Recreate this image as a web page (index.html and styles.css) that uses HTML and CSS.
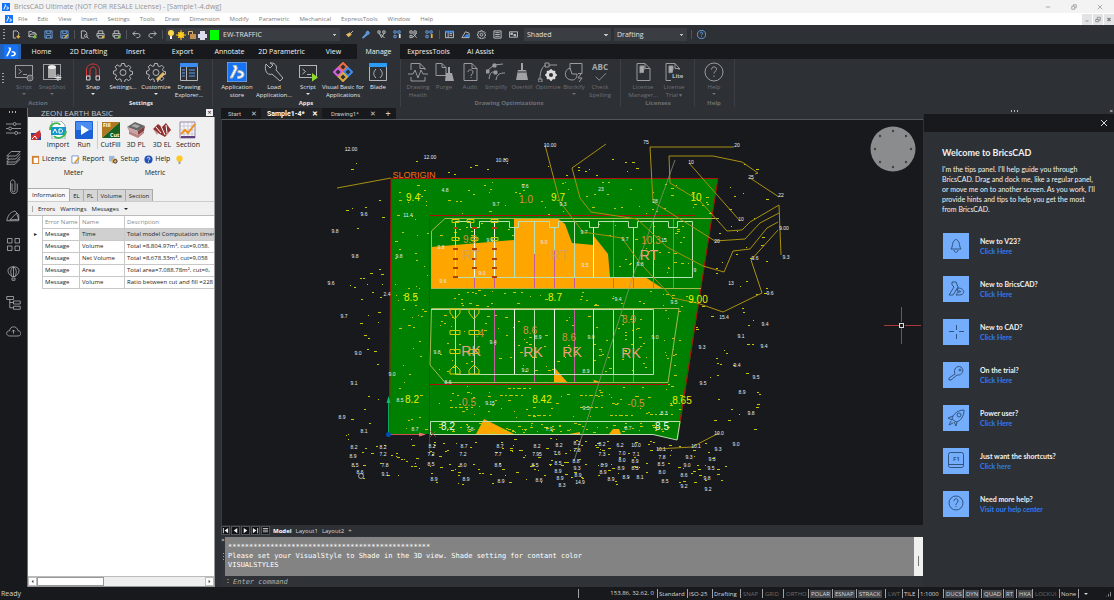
FILE: index.html
```html
<!DOCTYPE html>
<html lang="en">
<head>
<meta charset="utf-8">
<title>BricsCAD Ultimate - [Sample1-4.dwg]</title>
<link rel="stylesheet" href="styles.css">
</head>
<body>
<svg class="defs" aria-hidden="true">
  <symbol id="logo" viewBox="0 0 20 20"><rect width="20" height="20" fill="#1673f5"/><path d="M6 3.500h3.500l.8 3-4.800 9.500H3l4.600-9.500zM11 8.500c4 0 6 1.600 6 4s-2.500 4-6.500 4v-2.200c2.500 0 4-.5 4-1.800s-1.300-1.800-3.500-1.800z" fill="#fff"/></symbol>
  <symbol id="gear" viewBox="0 0 20 20"><path d="M8.500 1.500h3l.5 2.500 1.700.7 2.100-1.400 2 2-1.300 2.100.7 1.700 2.300.5v2.800l-2.300.5-.7 1.700 1.300 2.100-2 2-2.100-1.400-1.700.7-.5 2.500h-3L8 17.500l-1.700-.7-2.100 1.400-2-2 1.300-2.100-.7-1.700-2.300-.5V9.100l2.300-.5.7-1.700-1.300-2.100 2-2 2.100 1.400L8 4z"/><circle cx="10" cy="10.500" r="3"/></symbol>
  <symbol id="page" viewBox="0 0 20 20"><path d="M4 1.500h8l5 5v12H4zM12 1.500v5h5"/></symbol>
  <symbol id="term" viewBox="0 0 20 20"><rect x="1.500" y="3.500" width="17" height="12"/><path d="M4.500 7l3 2.500-3 2.500M9 12.500h4"/></symbol>
  <symbol id="brush" viewBox="0 0 20 20"><path d="M9 1h2v7h3l2 10H4L6 8h3z" fill="#a0a2a5" stroke="none"/><path d="M6 10h8" stroke="#2d3035"/></symbol>
  <symbol id="help" viewBox="0 0 20 20"><circle cx="10" cy="10" r="9"/><path d="M7.500 7.500c0-3.500 5-3.500 5-.3 0 2-2.500 2-2.500 4.300M10 13.500v1.500"/></symbol>
  <symbol id="floppy" viewBox="0 0 20 20"><path d="M2 2h16v16H2zM6 2v6h8V2M5 18v-6h10v6"/></symbol>
  <symbol id="printer" viewBox="0 0 20 20"><path d="M5 8V2h10v6M5 14H2V8h16v6h-3M5 12h10v6H5z"/></symbol>
  <symbol id="boxes" viewBox="0 0 20 20"><path d="M2 2h5v5H2zM11 2h5v5h-5zM2 12h5v5H2z"/></symbol>
</svg>

<header class="titlebar">
  <svg class="app-mark"><use href="#logo"/></svg>
  <span class="title">BricsCAD Ultimate (NOT FOR RESALE License) - [Sample1-4.dwg]</span>
  <div class="win-buttons">
    <button aria-label="Minimize"><svg viewBox="0 0 8 8"><path d="M1 4h6"/></svg></button>
    <button aria-label="Restore"><svg viewBox="0 0 8 8"><path d="M1 3h4v4H1zM3 3V1h4v4H5"/></svg></button>
    <button aria-label="Close"><svg viewBox="0 0 8 8"><path d="M1 1l6 6M7 1L1 7"/></svg></button>
  </div>
</header>

<nav class="menubar">
  <svg class="app-mark"><use href="#logo"/></svg>
  <button>File</button><button>Edit</button><button>View</button><button>Insert</button><button>Settings</button><button>Tools</button><button>Draw</button><button>Dimension</button><button>Modify</button><button>Parametric</button><button>Mechanical</button><button>ExpressTools</button><button>Window</button><button>Help</button>
  <div class="mdi-buttons">
    <button aria-label="Minimize drawing"><svg viewBox="0 0 8 8"><path d="M2 6h4"/></svg></button>
    <button aria-label="Restore drawing"><svg viewBox="0 0 8 8"><path d="M1 4h4v3H1zM3 4V1h4v4H5"/></svg></button>
    <button aria-label="Close drawing"><svg viewBox="0 0 8 8"><path d="M2 2l4 4M6 2L2 6" stroke-width="1.500"/></svg></button>
  </div>
</nav>

<div class="quickbar">
  <i class="grip"></i>
  <div class="qgroup">
    <button aria-label="New"><svg viewBox="0 0 20 20"><path d="M3 2h8l4 4v5M3 2v16h6"/><path d="M14 11v8M10 15h8" stroke="#e0b040" stroke-width="3"/></svg></button>
    <button aria-label="Open"><svg viewBox="0 0 20 20"><path d="M2 15V3h6l2 3h6v3M2 15l4-6h13l-3 6z"/><path d="M15 11v8M11 16h8" stroke="#7ac040" stroke-width="3"/></svg></button>
    <button aria-label="Save"><svg class="blue" viewBox="0 0 20 20"><use href="#floppy"/></svg></button>
    <button aria-label="Save as"><svg class="blue" viewBox="0 0 20 20"><use href="#floppy"/><path d="M10 18l8-8" stroke="#e0b040" stroke-width="3"/></svg></button>
  </div>
  <div class="qgroup">
    <button aria-label="Preview"><svg viewBox="0 0 20 20"><path d="M3 2h8l4 4v4M3 2v16h7"/><circle cx="13" cy="13" r="3"/><path d="M15 15l4 4"/></svg></button>
    <button aria-label="Print"><svg viewBox="0 0 20 20"><use href="#printer"/><circle cx="16" cy="16" r="3" fill="#e0b040" stroke="none"/></svg></button>
    <button aria-label="Publish"><svg viewBox="0 0 20 20"><use href="#printer"/><circle cx="16" cy="16" r="3" fill="#7ac040" stroke="none"/></svg></button>
  </div>
  <div class="qgroup">
    <button aria-label="Undo"><svg viewBox="0 0 20 20"><path d="M7 3L2 8l5 5M2 8h11c7 0 6 9 0 9h-3"/></svg></button>
    <button aria-label="Redo"><svg viewBox="0 0 20 20"><path d="M13 3l5 5-5 5M18 8H7c-7 0-6 9 0 9h3"/></svg></button>
  </div>
  <div class="layerbox">
    <svg viewBox="0 0 54 12"><circle cx="5" cy="4" r="3" fill="#ffd84a"/><path d="M4 7h2v3H4z" fill="#eee"/><circle cx="15" cy="6" r="3" fill="#ffc81e"/><path d="M15 1v10M10 6h10M12 3l6 6M18 3l-6 6" stroke="#ffc81e"/><path d="M22.500 6V2.500h4V5" fill="none" stroke="#d8b070"/><path d="M24 5h6v5h-6z" fill="#c09050"/><path d="M32 5h9v4h-9zM34 2h5v3h-5zM34 8h5v3h-5z" fill="#dde"/><path d="M44 1h9v10h-9z" fill="#00ff00"/></svg>
    <select class="layer" aria-label="Layer"><option>EW-TRAFFIC</option></select>
  </div>
  <div class="qgroup">
    <button aria-label="Match"><svg viewBox="0 0 20 20"><path d="M2 10l9-5 4 5-7 6z" fill="#e0b860" stroke="none"/><path d="M13 7l5-5"/></svg></button>
    <button aria-label="Pick color"><svg class="blue" viewBox="0 0 20 20"><path d="M3 17l9-10 3 3-10 8zM11 5l4-3 4 4-3 4z" fill="#5590d8"/></svg></button>
    <button aria-label="Filter"><svg viewBox="0 0 20 20"><path d="M2 2h5v5H2zM13 2h5v5h-5zM5 7l5 10 6-10M8 9l9 9"/></svg></button>
    <button aria-label="Isolate"><svg class="blue" viewBox="0 0 20 20"><use href="#boxes"/><path d="M15 9v9" stroke="#ddd" stroke-width="4"/></svg></button>
    <button aria-label="Hide"><svg viewBox="0 0 20 20"><use href="#boxes"/><path d="M8 7l9 10M17 7l-9 10"/></svg></button>
    <button aria-label="Show"><svg class="blue" viewBox="0 0 20 20"><use href="#boxes"/><path d="M15 9v9" stroke="#f0b030" stroke-width="4"/></svg></button>
  </div>
  <div class="qgroup open">
    <button aria-label="Explorer"><svg viewBox="0 0 20 20"><path d="M1 3h18v14H1zM7 3v14M10 8h6M10 12h6"/><path d="M1 4h18" stroke="#3a8cf0" stroke-width="4"/></svg></button>
    <button aria-label="Structure"><svg viewBox="0 0 20 20"><path d="M2 17L10 4l8 3v10z"/><path d="M8 15l6-6 3 5z" fill="#3a8cf0" stroke="#3a8cf0"/></svg></button>
    <button aria-label="Settings"><svg><use href="#gear"/></svg></button>
    <button aria-label="Properties"><svg viewBox="0 0 20 20"><path d="M2 2h16v16H2zM5 6h10M5 10h10M5 14h10"/></svg></button>
    <button aria-label="Panels"><svg viewBox="0 0 20 20"><path d="M1 4h18v12H1z"/><path d="M4 7h4v3H4zM11 10h4v3h-4z" fill="#ccc"/></svg></button>
  </div>
  <select class="visual" aria-label="Visual style"><option>Shaded</option></select>
  <select class="space" aria-label="Workspace"><option>Drafting</option></select>
  <div class="qgroup last"><button aria-label="Help"><svg class="blue"><use href="#help"/></svg></button></div>
</div>

<nav class="ribbon-tabs">
  <button class="brand" aria-label="Application menu"><svg><use href="#logo"/></svg></button>
  <button>Home</button><button>2D Drafting</button><button>Insert</button><button>Export</button><button>Annotate</button><button class="wide">2D Parametric</button><button>View</button><button class="active">Manage</button><button class="wide">ExpressTools</button><button>AI Assist</button>
</nav>

<section class="ribbon">
  <i class="grip tall"></i>
  <div class="group dim action">
    <div class="tools">
      <button class="w28"><svg viewBox="0 0 20 20"><use href="#term"/><circle cx="16" cy="16" r="3" fill="#55585c"/></svg>Script<b></b></button>
      <button class="w28"><svg viewBox="0 0 20 20"><rect x="1.500" y="2.500" width="17" height="15"/><path d="M6 5v11h8V5z" fill="#aaa" stroke="none"/><ellipse cx="10" cy="5" rx="4" ry="2" fill="#eee" stroke="none"/><path d="M16 12v7M12.500 15.500h7M13.500 13l5 5M18.500 13l-5 5" stroke="#ddd"/></svg>SnapShot<b></b></button>
    </div><h2>Action</h2>
  </div>
  <div class="group settings">
    <div class="tools">
      <button class="w30"><svg viewBox="0 0 20 20"><path d="M3.500 14V8c0-8 13-8 13 0v6h-3.500V8c0-4-6-4-6 0v6z" stroke="#d83a3a"/><path d="M3.500 14H7v4H3.500zM13 14h3.500v4H13z" stroke="#ccc"/></svg>Snap<b></b></button>
      <button class="w30"><svg><use href="#gear"/></svg>Settings...</button>
      <button class="w36"><svg viewBox="0 0 20 20"><use href="#gear"/><path d="M11 18l7-7" stroke="#e0b868" stroke-width="3"/></svg>Customize<b></b></button>
      <button class="w30"><svg viewBox="0 0 20 20"><path d="M1.500 1.500h17v17h-17zM7.500 5v13"/><path d="M1 3h18" stroke="#3a8cf0" stroke-width="4"/><path d="M3 8h3M3 11h3M3 14h3M10 8h6M10 11h6M10 14h6" stroke="#5aa0f5"/></svg>Drawing<br>Explorer...</button>
    </div><h2>Settings</h2>
  </div>
  <div class="group apps">
    <div class="tools">
      <button class="w38"><svg><use href="#logo"/></svg>Application<br>store</button>
      <button class="w36"><svg viewBox="0 0 20 20"><path d="M2 2l4 4 3-3-3-2c4-1 8 3 6 7l7 8-3 3-8-7c-5 2-8-4-6-10z"/></svg>Load<br>Application...</button>
      <button class="w32"><svg viewBox="0 0 20 20"><use href="#term"/><path d="M14 11l6 4.500-6 4z" fill="#8fdc28" stroke="none"/></svg>Script<b></b></button>
      <button class="w38"><svg class="vb" viewBox="0 0 20 20"><path d="M10 1l4 4-4 4-4-4z" stroke="#ef7044"/><path d="M15 6l4 4-4 4-4-4z" stroke="#3a8cf0"/><path d="M5 6l4 4-4 4-4-4z" stroke="#d060e0"/><path d="M10 11l4 4-4 4-4-4z" stroke="#e0a840"/></svg>Visual Basic for<br>Applications</button>
      <button class="w32"><svg viewBox="0 0 20 20"><path d="M1.500 1.500h17v17h-17z"/><path d="M1 3h18" stroke="#2a9cf5" stroke-width="4"/><path d="M8 7c-3 3-3 6 0 9M12 7c3 3 3 6 0 9"/></svg>Blade</button>
    </div><h2>Apps</h2>
  </div>
  <div class="group dim optimize">
    <div class="tools">
      <button class="w26"><svg viewBox="0 0 20 20"><path d="M3 8V1.500h9l5 5V8M12 1.500v5h5M3 15v4h14v-4M0 12h5l2-4 3 8 3-8 2 4h5"/></svg>Drawing<br>Health</button>
      <button class="w26"><svg viewBox="0 0 20 20"><path d="M2 1.500h6l4 4v8H2zM8 1.500v4h4"/><path d="M14 5h2v6h2l2 8h-9l1-8h2z" fill="#a0a2a5" stroke="none"/></svg>Purge</button>
      <button class="w26"><svg viewBox="0 0 20 20"><use href="#page"/><path d="M8 10c0-3 5-3 5 0 0 2-2 2-2 4M11 15v1"/></svg>Audit</button>
      <button class="w26"><svg viewBox="0 0 20 20"><path d="M1 9L8 3l9-1M3 17c1-7 3-8 7-6M10 18c1-6 4-7 9-7"/><path d="M0 8h3v3H0zM7 2h3v3H7zM8 9h3v3H8z" fill="#999"/></svg>Simplify</button>
      <button class="w26"><svg><use href="#brush"/></svg>Overkill</button>
      <button class="w26"><svg viewBox="0 0 20 20"><path d="M2 17C2 8 5 4 8 3M11 3h8M0 17h4v3H0zM7 1h4v4H7z"/><circle cx="13" cy="13" r="3.500" stroke="#ddd" stroke-width="3"/><path d="M13 7v12M7 13h12M9 9l8 8M17 9l-8 8" stroke="#ddd" stroke-width="1.500"/><circle cx="13" cy="13" r="2" fill="#2d3035" stroke="none"/></svg>Optimize</button>
      <button class="w26"><svg viewBox="0 0 20 20"><path d="M6 1.500h12v10h-4M6 1.500v6M6 6c-7 2-6 12 2 12 4 0 5-3 5-6H8zM17 12l-3 4h4l-3 4"/></svg>Blockify<b></b></button>
      <button class="w26"><span class="abc">ABC</span><svg class="tick" viewBox="0 0 20 10"><path d="M5 4l4 4 8-8"/></svg>Check<br>Spelling</button>
    </div><h2>Drawing Optimizations</h2>
  </div>
  <div class="group dim licenses">
    <div class="tools">
      <button class="w32"><svg viewBox="0 0 20 20"><use href="#page"/><path d="M7 4h4v3l-1 4-1-1-2 1z" fill="#aaa"/></svg>License<br>Manager...</button>
      <button class="w30"><svg viewBox="0 0 20 20"><path d="M15 8V6l-4-4.500H2v17h5M11 1.500v5h5"/><path d="M5 4h4v3l-1 4-1-1-2 1z" fill="#aaa"/><text x="8" y="16" class="lite">Lite</text></svg>License<br>Trial ▾</button>
    </div><h2>Licenses</h2>
  </div>
  <div class="group dim help">
    <div class="tools"><button class="w26"><svg><use href="#help"/></svg>Help<b></b></button></div><h2>Help</h2>
  </div>
</section>

<div class="work">
  <aside class="rail">
    <i class="grip-h"></i>
    <button aria-label="Properties"><svg viewBox="0 0 20 20"><path d="M0 4h9M14 4h6M0 10h3M8 10h12M0 16h11M16 16h4"/><circle cx="11.500" cy="4" r="2"/><circle cx="5.500" cy="10" r="2"/><circle cx="13.500" cy="16" r="2"/></svg></button>
    <button aria-label="Layers"><svg viewBox="0 0 20 20"><path d="M7 2h12l-6 6H1zM4 8l-3 4h12l6-7M4 12l-3 4h12l6-7M3 16l-2 3h11l7-7"/></svg></button>
    <button aria-label="Attachments"><svg viewBox="0 0 20 20"><path d="M8 6v9c0 3 4 3 4 0V5c0-5-6-5-6 0v10c0 6 9 6 9 0V6"/></svg></button>
    <button aria-label="Structure"><svg viewBox="0 0 20 20"><path d="M1 17c2-10 7-12 11-13l5 5v8zM5 16l9-9 3 8z"/></svg></button>
    <button aria-label="Components"><svg viewBox="0 0 20 20"><path d="M2 2h6v6H2zM12 2h6v6h-6zM2 12h6v6H2zM12 12h6v6h-6z"/></svg></button>
    <button aria-label="Balloon"><svg viewBox="0 0 20 20"><path d="M10 1c-10 0-9 9-2 13h4c7-4 8-13-2-13zM10 1c-5 3-4 9-2 13M10 1c5 3 4 9 2 13M10 1v13M8 16h4v3H8z"/></svg></button>
    <button aria-label="Tree"><svg viewBox="0 0 20 20"><path d="M1 2h9v4H1zM5 6v11h5M5 10h5M10 8h9v4h-9zM10 15h9v4h-9z"/></svg></button>
    <button aria-label="Cloud"><svg viewBox="0 0 20 20"><path d="M5 16c-5 0-6-7 0-7 0-7 10-7 11 0 5 0 5 7 0 7zM10 13V8M8 10l2-2 2 2"/></svg></button>
  </aside>

  <section class="zeon">
    <header><h2>ZEON EARTH BASIC</h2><button aria-label="Close panel">×</button></header>
    <div class="zeon-body">
      <div class="bigtools">
        <svg class="pin" viewBox="0 0 10 10"><path d="M0 3h10v7H0z" fill="#2848a0"/><path d="M0 6l9-6 1 6-4 4H0z" fill="#d03030"/><path d="M1 9l3-3 2 3" stroke="#fff" fill="none"/></svg>
        <button><svg viewBox="0 0 18 18"><path d="M3 0h9l4 4v14H3z" fill="#fff" stroke="#9ab"/><path d="M2 6h15v8H2z" fill="#1598c8"/><path d="M4 12l2-4 2 4M10 8v4h2c2 0 2-4 0-4z" stroke="#fff" fill="none"/><path d="M1 9c0-8 9-8 10-5M17 10c-1 8-10 8-12 5" stroke="#40b850" stroke-width="2" fill="none"/></svg>Import</button>
        <button><svg viewBox="0 0 18 18"><rect width="18" height="18" rx="1" fill="#1c60d8"/><path d="M1 1h16v8H1z" fill="#4b8cf0"/><path d="M6 4l8 5-8 5z" fill="#fff"/></svg>Run</button>
        <button class="cut"><svg viewBox="0 0 20 18"><path d="M0 0h20L0 18z" fill="#b07820"/><path d="M20 0v18H0z" fill="#186020"/><text x="1" y="6">Fill</text><text x="9" y="17">Cut</text></svg>CutFill</button>
        <button><svg viewBox="0 0 18 18"><path d="M0 6l8-5 10 4-7 5z" fill="#666"/><path d="M0 6l11 4v4L2 10z" fill="#c8a0a0"/><path d="M11 10l7-5-1 5-6 4z" fill="#804040"/><path d="M2 10l9 4 6-4v2l-6 5-9-4z" fill="#b88080"/><path d="M4 5l4-2 5 2-3 2z" fill="#aaa"/></svg>3D PL</button>
        <button><svg viewBox="0 0 18 18"><path d="M0 8l5-5 4 3 4-4 5 7-6 7-7-4z" fill="#903030"/><path d="M3 6l5 6M8 5l4 9M13 4l1 8" stroke="#fff"/><path d="M0 8l5 4-1 2zM18 9l-5 4v2z" fill="#c89090"/></svg>3D EL</button>
        <button><svg viewBox="0 0 18 18"><path d="M1 1h15v16H1z" fill="#f4f4f8" stroke="#98a"/><path d="M1 5h15M1 9h15M1 13h15M5 1v16M9 1v16M13 1v16" stroke="#aab" stroke-width="0.500"/><path d="M2 13l4-4 3 3 7-9" stroke="#f09020" stroke-width="2" fill="none"/><path d="M2 16h14" stroke="#604080" stroke-width="2"/></svg>Section</button>
      </div>
      <div class="smalltools">
        <button><svg viewBox="0 0 10 10"><path d="M1 1h8v9H1z" fill="#d08030"/><path d="M3 3h5v6H3z" fill="#fff"/></svg>License</button>
        <button><svg viewBox="0 0 10 10"><path d="M1 1h7v8H1z" fill="#fff" stroke="#7090d0"/><path d="M4 9l5-6" stroke="#e0a030" stroke-width="2"/></svg>Report</button>
        <button><svg viewBox="0 0 10 10"><path d="M0 1h6v6H0z" fill="#9ab8e0"/><path d="M3 4h6v5H3z" fill="#d8b060"/><circle cx="7" cy="7" r="2" fill="none" stroke="#335"/></svg>Setup</button>
        <button><svg viewBox="0 0 10 10"><circle cx="5" cy="5" r="4.500" fill="#2050b8"/><path d="M3.500 4c0-2 3-2 3 0L5 6M5 7v1" stroke="#fff" fill="none"/></svg>Help</button>
        <button aria-label="Tip"><svg viewBox="0 0 10 10"><circle cx="5" cy="4" r="3.500" fill="#ffc820"/><path d="M4 7h2v3H4z" fill="#999"/></svg></button>
      </div>
      <div class="units"><span>Meter</span><span>Metric</span></div>
      <div class="ztabs"><button class="on">Information</button><button>EL</button><button>PL</button><button>Volume</button><button>Section</button></div>
      <div class="filters"><i></i><button>Errors</button><button>Warnings</button><button>Messages</button><b></b></div>
      <div class="tablewrap">
        <table>
          <thead><tr><th class="mark"></th><th class="err">Error Name</th><th class="name">Name</th><th>Description</th></tr></thead>
          <tbody>
            <tr class="sel"><td class="mark">▸</td><td class="err">Message</td><td>Time</td><td>Total model Computation time=0</td></tr>
            <tr><td class="mark"></td><td>Message</td><td>Volume</td><td>Total =8,804.97m³, cut=9,058.</td></tr>
            <tr><td class="mark"></td><td>Message</td><td>Net Volume</td><td>Total =8,678.33m³, cut=9,058</td></tr>
            <tr><td class="mark"></td><td>Message</td><td>Area</td><td>Total area=7,088.78m², cut=6,</td></tr>
            <tr><td class="mark"></td><td>Message</td><td>Volume</td><td>Ratio between cut and fill =228</td></tr>
          </tbody>
        </table>
      </div>
      <div class="hscroll"><button aria-label="Scroll left"><svg viewBox="0 0 8 8"><path d="M5 2v4L3 4z"/></svg></button><i></i><button aria-label="Scroll right"><svg viewBox="0 0 8 8"><path d="M3 2v4l2-2z"/></svg></button></div>
    </div>
  </section>

  <main class="center">
    <div class="doctabs">
      <button class="start">Start<span>✕</span></button><button class="on">Sample1-4*<span>✕</span></button><button class="drawing">Drawing1*<span>✕</span></button><button class="plus" aria-label="New drawing">+</button>
    </div>
    <div class="canvas">
      <svg viewBox="222 120 701 405" preserveAspectRatio="xMidYMid meet">
        <path d="M391 178H718L678 440L650 434H389z" fill="#008000"/>
        <g fill="#ffa500"><path d="M431 247L514 240V218H557L565 224L572 243L593 245V235L608 254L610 277H645L662 288H431z"/><path d="M554 367L567 382H554zM476 434L484 419L514 434zM609 434L613 429H619L621 434zM569 434L580 432V434zM593 383L594 380L600 382z"/></g>
        <g id="ticks" stroke="#c8c800" stroke-width="1"></g>
        <g class="red"><path d="M389.500 434L391 178.500H718L678 434M430 215.500H695M429.500 218V455M430 384.500H668"/></g>
        <g class="pink"><path d="M474.500 277V288M494.500 277V288M534.500 240V288M554.500 250V288M574.500 277V288M613.500 220V288M633.500 277V288M653.500 277V288M673.500 218V288M494.500 309V382M534.500 330V382M574.500 309V382M613.500 374V382M633.500 374V382M576 309.500H610"/></g>
        <path class="khaki" d="M431.500 288V231L445 218.500H719M431 288.500H701M431.500 308.500H679L668 382.500H445L430 365z"/>
        <g class="white"><path d="M455.500 277.500V221.500H470.500V227.500H479.500V221.500H509.500V227.500H518.500V221.500H549.500V227.500H558.500V221.500H589.500V227.500H598.500V221.500H628.500V227.500H637.500V221.500H668.500V227.500H677.500V221.500H692.500V277.500zM474.500 227V277M494.500 221V277M514.500 227V277M534.500 221V254M554.500 227V250M574.500 221V277M593.500 227V277M633.500 227V277M653.500 221V277"/><path d="M431 309.500H653.500V374.500H455.500V309M474.500 309V374M514.500 309V374M534.500 309V374M554.500 309V374M593.500 309V374M613.500 309V374M633.500 309V374"/><path d="M430.500 434.500V421.500H680L677 440L653 434.500z"/></g>
        <path class="heavy" d="M474.500 227V277M494.500 221V277M514.500 309V374M554.500 309V374M593.500 309V374M593.500 227V277"/>
        <g class="columns"><path d="M452 219.500h7v3h-7zM467 219.500h7v3h-7zM491 219.500h7v3h-7zM452 237.500h7v3h-7zM471 237.500h7v3h-7zM491 237.500h7v3h-7zM450 330.500h10v4h-10zM469 330.500h10v4h-10zM450 349.500h10v4h-10zM469 349.500h10v4h-10zM450 309v4l5 6 5-6v-4zM469 309v4l5 6 5-6v-4zM450 374v-4l5-5 5 5v4zM469 374v-4l5-5 5 5v4z"/><path d="M453 228h5M472 228h5M492 228h5M453 249h5M472 249h5M492 249h5M453 259h5M472 259h5M492 259h5M453 268h5M472 268h5M492 268h5M453 277h5M492 277h5" stroke="#b04000" stroke-width="2"/></g>
        <path class="contour" d="M545 145L560 202L583 232L622 238L640 263L673 298L697 303L723 312L762 293L751 260L778 230M606 144L572 168L580 198L591 212L637 219L667 247L703 266L724 272L733 251L750 249L767 228L778 222M734 147H650L653 202L715 241L745 239L760 223L779 213M755 174L758 173L742 162L713 156H669L670 183L700 201L727 231L742 230L750 222L779 205L781 255M689 163L740 221M750 178L779 197M337 188L391 178M657 449L692 447L719 433"/>
        <path d="M675 160L633 276L574 461" stroke="#9a9a80" fill="none" stroke-width="0.700"/>
        <g class="level yellow"><text x="413" y="201">9.4</text><text x="558" y="201">9.7</text><text x="696" y="201">10</text><text x="411" y="301">8.5</text><text x="555" y="301">8.7</text><text x="698" y="303">9.00</text><text x="412" y="403">8.2</text><text x="542" y="403">8.42</text><text x="682" y="404">8.65</text></g>
        <g class="level white-text"><text x="448" y="430">8.2</text><text x="662" y="430">8.5</text></g>
        <g class="level brown"><text x="526" y="203">1.0</text><text x="470" y="243">9.9</text><text x="651" y="244">10.3</text><text x="469" y="406">0.5</text><text x="636" y="407">-0.5</text><text x="480" y="337">.4</text><text x="530" y="334">8.6</text><text x="569" y="341">8.6</text><text x="629" y="323">8.9</text></g>
        <g class="zone"><text class="faint" x="471" y="260">RT</text><text class="faint" x="559" y="260">RT</text><text x="649" y="260">RT</text><text x="471" y="356">RK</text><text x="533" y="357">RK</text><text x="572" y="357">RK</text><text x="631" y="358">RK</text></g>
        <text class="origin" x="414" y="178">SLORIGIN</text>
        <g id="spots"></g>
        <path d="M388.500 434V402" stroke="#00b060"/><path d="M388.500 396l2 7h-4z" fill="#00c070"/><path d="M389 434.500h30" stroke="#d05050"/><path d="M426 434.500l-7-2v4z" fill="#f07070"/><circle cx="388.500" cy="434.500" r="2.500" fill="#0050b0"/><circle cx="361" cy="476" r="2.500" fill="none" stroke="#ddd" stroke-width=".7"/>
        <path d="M430 431l6 6M436 431l-6 6" stroke="#b05050" stroke-width=".7"/>
        <circle cx="893" cy="149" r="22.500" fill="#8b8c8e"/>
        <g fill="#444"><circle cx="893" cy="131" r="1.200"/><circle cx="893" cy="167" r="1.200"/><circle cx="875" cy="149" r="1.200"/><circle cx="911" cy="149" r="1.200"/><circle cx="880" cy="136" r="1.200"/><circle cx="906" cy="136" r="1.200"/><circle cx="880" cy="162" r="1.200"/><circle cx="906" cy="162" r="1.200"/></g>
        <path d="M901.500 307V322M901.500 328V344" stroke="#148060"/><path d="M884 325.500H899M905 325.500H921" stroke="#a83a3a"/><rect x="899.500" y="323.500" width="4" height="4" fill="none" stroke="#ddd"/>
      </svg>
    </div>
    <div class="layouts">
      <button aria-label="First"><svg viewBox="0 0 8 8"><path d="M1 1v6h1V1zM7 1v6L3 4z"/></svg></button><button aria-label="Previous"><svg viewBox="0 0 8 8"><path d="M6 1v6L2 4z"/></svg></button><button aria-label="Next"><svg viewBox="0 0 8 8"><path d="M2 1v6l4-3z"/></svg></button><button aria-label="Last"><svg viewBox="0 0 8 8"><path d="M6 1v6h1V1zM1 1v6l4-3z"/></svg></button><button aria-label="List"><svg viewBox="0 0 8 8"><path d="M1 1h6v1H1zM1 3h6v1H1zM1 5h6v1H1z"/></svg></button>
      <button class="tab on">Model</button><button class="tab">Layout1</button><button class="tab">Layout2</button><button class="tab">+</button>
    </div>
    <div class="command">
      <div class="cmdgrip"><span>×</span><i class="grip"></i></div>
      <div class="cmdmain">
        <pre>************************************************
Please set your VisualStyle to Shade in the 3D view. Shade setting for contant color
VISUALSTYLES</pre>
        <i class="thumb"></i>
        <label for="cmd">:</label><input id="cmd" placeholder="Enter command">
      </div>
    </div>
  </main>

  <aside class="tips">
    <div class="tips-grip"><i class="grip-h"></i><span>×</span></div>
    <div class="tips-head"><button aria-label="Close tips"><svg viewBox="0 0 8 8"><path d="M1 1l6 6M7 1L1 7"/></svg></button></div>
    <div class="tips-body">
      <h2>Welcome to BricsCAD</h2>
      <p>I'm the tips panel. I'll help guide you through<br>BricsCAD. Drag and dock me, like a regular panel,<br>or move me on to another screen. As you work, I'll<br>provide hints and tips to help you get the most<br>from BricsCAD.</p>
      <ul>
        <li><svg viewBox="0 0 26 26"><path d="M8 16c2-2 1-7 3-8 1-2 3-2 4 0 2 1 1 6 3 8zM11 17c0 3 4 3 4 0"/></svg><div><h3>New to V23?</h3><a href="#v23">Click Here</a></div></li>
        <li><svg viewBox="0 0 26 26"><path d="M9 6h4l2 5-5 8H6l5-8-2-2zM15 12c7 0 8 7 1 7h-3l2-3h2c1 0 1-1 0-1h-3z"/></svg><div><h3>New to BricsCAD?</h3><a href="#bricscad">Click Here</a></div></li>
        <li><svg viewBox="0 0 26 26"><path d="M13.500 6v5M13.500 15v5M6 12.500h5M16 12.500h5"/></svg><div><h3>New to CAD?</h3><a href="#cad">Click Here</a></div></li>
        <li><svg viewBox="0 0 26 26"><path d="M12 12c-2-5 2-9 6-7 4 3 1 9-4 8l-6 5H6v-2z"/><circle cx="17" cy="8" r="1"/></svg><div><h3>On the trial?</h3><a href="#trial">Click Here</a></div></li>
        <li><svg viewBox="0 0 26 26"><path d="M9 14c1-5 6-9 12-9 0 6-3 11-8 12zM10 11l-5 2 4 2M14 17l-1 4-2-4M8 16l-2 4 4-2"/><circle cx="16" cy="10" r="2"/></svg><div><h3>Power user?</h3><a href="#power">Click Here</a></div></li>
        <li><svg viewBox="0 0 26 26"><rect x="5.500" y="4.500" width="15" height="15" rx="2"/><path d="M6 16.500h15"/><text x="10" y="13">F1</text></svg><div><h3>Just want the shortcuts?</h3><a href="#keys">Click here</a></div></li>
        <li><svg viewBox="0 0 26 26"><circle cx="13" cy="12" r="7"/><path d="M11 10c0-3 4-3 4 0 0 2-2 2-2 4M13 15v1"/></svg><div><h3>Need more help?</h3><a href="#help-center">Visit our help center</a></div></li>
      </ul>
    </div>
  </aside>
</div>

<footer class="status">
  <span class="ready">Ready</span>
  <div class="cells"><span class="coords">153.86, 32.62, 0</span><button>Standard</button><button>ISO-25</button><button>Drafting</button><button class="off">SNAP</button><button class="off">GRID</button><button class="off">ORTHO</button><button class="lit"><em>POLAR</em></button><button class="lit"><em>ESNAP</em></button><button class="lit"><em>STRACK</em></button><button class="off">LWT</button><button>TILE</button><button>1:1000</button><button class="lit"><em>DUCS</em></button><button class="lit"><em>DYN</em></button><button class="lit"><em>QUAD</em></button><button class="lit"><em>RT</em></button><button class="lit"><em>HKA</em></button><button class="off">LOCKUI</button><button>None</button><span class="end"><b></b><i></i></span></div>
</footer>
<script src="drawing.js"></script>
</body>
</html>
```
FILE: styles.css
```css
* { box-sizing: border-box; }
body { margin: 0; min-height: 100vh; display: flex; flex-direction: column; background: #2d3035; color: #e4e5e7; font: 7px/8px "Open Sans", "Noto Sans", sans-serif; overflow: hidden; }
button { font: inherit; color: inherit; background: none; border: 0; padding: 0; margin: 0; white-space: nowrap; }
h2, h3, p, ul, pre { margin: 0; padding: 0; font-size: inherit; }
svg { fill: none; stroke: currentColor; stroke-width: 1; display: block; }
.defs { display: none; }
.app-mark { width: 8px; height: 8px; stroke: none; }

.titlebar { height: 13px; display: flex; align-items: center; gap: 4px; padding-left: 2px; background: #f3f3f3; color: #939393; }
.titlebar .title { font-size: 7px; }
.win-buttons { margin-left: auto; display: flex; gap: 18px; padding-right: 10px; }
.win-buttons svg { width: 8px; height: 6px; }
.menubar { height: 12px; display: flex; align-items: center; gap: 10px; padding-left: 5px; background: #fff; color: #7c7c7c; font-size: 6px; }
.menubar .app-mark { margin-right: -5px; }
.mdi-buttons { margin-left: auto; display: flex; gap: 1px; }
.mdi-buttons button { width: 10px; height: 11px; background: #e2e3e5; padding: 2px; }
.mdi-buttons svg { width: 6px; height: 7px; }

.grip { width: 2px; height: 12px; background: repeating-linear-gradient(#a0a2a5 0 1px, transparent 1px 3px); }
.grip.tall { margin: 14px 0 0 2px; height: 10px; }
.grip-h { display: block; width: 9px; height: 2px; background: repeating-linear-gradient(90deg, #b0b2b5 0 1px, transparent 1px 3px); }
.quickbar { height: 19px; display: flex; align-items: center; padding-left: 3px; background: #2d3035; }
.quickbar .grip { margin-right: 2px; }
.quickbar svg { width: 9px; height: 9px; stroke: #c4c6c8; stroke-width: 2; }
.quickbar svg.blue { stroke: #6ba4e8; }
.qgroup { display: flex; gap: 7px; padding: 0 5px; border-right: 1px solid #50545a; }
.qgroup.open { border-right-color: transparent; }
.qgroup.last { border-right: 0; border-left: 1px solid #50545a; margin-left: 4px; }
.layerbox { display: flex; align-items: center; height: 13px; background: #3a3d42; margin-left: 3px; }
.quickbar .layerbox svg { width: 54px; height: 12px; stroke: none; stroke-width: 1; }
.quickbar select { height: 13px; border: 0; border-radius: 0; background: #3a3d42; color: #e0e0e0; font: 7px "Open Sans", sans-serif; padding: 0 3px; appearance: none; background-image: linear-gradient(45deg, transparent 50%, #c0c0c0 50%), linear-gradient(-45deg, transparent 50%, #c0c0c0 50%); background-size: 2px 2px; background-position: right 5px center, right 3px center; background-repeat: no-repeat; }
.layer { width: 120px; }
.visual { width: 87px; }
.space { width: 73px; margin-left: 3px; }

.ribbon-tabs { height: 15px; display: flex; background: #18191c; color: #f2f2f2; }
.ribbon-tabs button { width: 47px; }
.ribbon-tabs .brand { width: 21px; background: #2464b8; display: grid; place-items: center; margin-right: -3px; }
.ribbon-tabs .brand svg { width: 14px; height: 14px; stroke: none; }
.ribbon-tabs .wide { width: 57px; }
.ribbon-tabs .active { width: 43px; background: #2d3035; }
.ribbon { height: 49px; display: flex; font-size: 6px; line-height: 8px; }
.group { border-right: 1px solid #3b3e43; display: flex; flex-direction: column; height: 48px; padding-top: 3px; }
.tools { display: flex; flex: 1; align-items: flex-start; }
.tools button { display: flex; flex-direction: column; align-items: center; line-height: 8px; text-align: center; }
.tools svg { width: 20px; height: 20px; stroke: #b4b6b9; margin-bottom: 1px; }
.tools .vb { stroke-width: 2; }
.tools b, .filters b, .end b { border: 2px solid transparent; border-top-color: currentColor; border-bottom: 0; width: 4px; margin: 2px auto 0; }
.group h2 { text-align: center; font-weight: 700; line-height: 8px; }
.dim { color: #6e7176; }
.dim svg { stroke: #999b9e; }
.abc { font: 700 8px/9px "Open Sans", sans-serif; color: #a6a8aa; height: 11px; }
.tools .tick { height: 9px; }
.lite { font: 700 6px "Open Sans", sans-serif; fill: #bbb; stroke: none; }
.w26 { width: 26px; } .w28 { width: 28px; } .w30 { width: 30px; } .w32 { width: 32px; } .w36 { width: 36px; } .w38 { width: 38px; }
.action { padding-left: 6px; padding-right: 7px; }
.settings { padding-left: 4px; padding-right: 8px; }
.apps { padding-left: 5px; padding-right: 6px; }
.optimize { padding-left: 4px; padding-right: 7px; }
.licenses { padding-left: 6px; padding-right: 5px; }
.help { padding-left: 6px; padding-right: 7px; }

.work { flex: 1; display: grid; grid-template-columns: 27px 191px minmax(0, 1fr) 191px; gap: 0; min-height: 0; }
.rail { background: #18191c; display: flex; flex-direction: column; align-items: center; gap: 14px; padding-top: 3px; }
.rail svg { width: 15px; height: 15px; stroke: #b8babd; }
.rail .grip-h { margin-bottom: -6px; }

.zeon { display: flex; flex-direction: column; color: #222; border-left: 1px solid #707070; min-height: 0; }
.zeon > header { height: 9px; display: flex; align-items: center; justify-content: space-between; padding: 0 5px 0 13px; color: #c4c6c8; }
.zeon h2 { font: 8px/9px "Open Sans", sans-serif; }
.zeon > header button { width: 7px; height: 7px; background: #eee; color: #111; line-height: 6px; }
.zeon-body { flex: 1; margin-right: 3px; border-right: 1px solid #999; border-bottom: 1px solid #999; background: #f0f0f0; display: flex; flex-direction: column; min-height: 0; }
.bigtools { height: 36px; display: flex; align-items: center; padding-left: 3px; }
.bigtools button { width: 26px; display: flex; flex-direction: column; align-items: center; gap: 2px; line-height: 8px; }
.bigtools button svg { width: 18px; height: 18px; stroke: none; }
.bigtools .cut { border-left: 1px solid #ccc; }
.bigtools text { font: 700 6px "Open Sans", sans-serif; fill: #fff; }
.pin { width: 10px; height: 10px; margin-right: 4px; stroke: none; }
.smalltools { height: 12px; display: flex; align-items: center; gap: 5px; padding-left: 3px; }
.smalltools button { display: flex; align-items: center; gap: 2px; }
.smalltools svg { width: 9px; height: 9px; stroke: none; }
.units { height: 24px; display: flex; padding-top: 4px; }
.units span { width: 72px; text-align: center; }
.units span:first-child { width: 91px; }
.ztabs { height: 13px; display: flex; align-items: flex-end; font-size: 6px; border-bottom: 1px solid #ccc; }
.ztabs button { height: 12px; background: #d6d6d6; border: 1px solid #aaa; border-bottom: 0; border-left: 0; padding: 0 3px; }
.ztabs .on { height: 13px; background: #f8f8f8; padding: 0 4px; }
.filters { height: 13px; display: flex; align-items: center; gap: 5px; padding-left: 4px; font-size: 6px; }
.filters i { width: 1px; height: 6px; background: #aaa; }
.filters b { margin: 0; }
.tablewrap { flex: 1; background: #fff; overflow: hidden; border-top: 1px solid #bbb; }
table { border-collapse: collapse; table-layout: fixed; width: 260px; font-size: 6px; }
th, td { height: 12px; padding: 0 2px; border: 1px solid #c8c8c8; text-align: left; font-weight: 400; white-space: nowrap; line-height: 8px; }
th { color: #888; border-top: 0; }
.mark { width: 14px; border-color: transparent #c8c8c8 transparent transparent; text-align: center; }
th.err { width: 37px; } th.name { width: 45px; }
.sel td { background: #d0d0d0; }
.sel td.err, .sel td.mark { background: #fff; }
.hscroll { height: 10px; display: flex; background: #eee; border-top: 1px solid #bbb; }
.hscroll button { width: 9px; background: #fff; border: 1px solid #bbb; }
.hscroll svg { fill: #444; stroke: none; height: 7px; width: 7px; }
.hscroll i { width: 67px; background: #fff; border: 1px solid #999; margin-right: auto; }

.center { display: flex; flex-direction: column; margin-left: 3px; min-width: 0; min-height: 0; }
.doctabs { height: 11px; display: flex; background: #2d3035; color: #c8cacd; font: 6px/10px Roboto, sans-serif; }
.doctabs button { display: flex; align-items: center; justify-content: space-between; background: #18191c; padding: 0 4px 0 7px; }
.doctabs span { font-size: 7px; }
.doctabs .start { width: 40px; }
.doctabs .on { width: 61px; padding-left: 6px; background: #222428; color: #fff; font-weight: 700; font-size: 7px; }
.doctabs .drawing { width: 58px; padding-left: 9px; }
.doctabs .plus { width: 16px; font-size: 9px; justify-content: center; padding: 0; }
.canvas { flex: 1; min-height: 0; background: #18191c; border-top: 1px solid #50565a; border-left: 1px solid #3a3e42; }
.canvas svg { width: 100%; height: 100%; stroke: none; overflow: hidden; }
.red { stroke: #b01010; stroke-width: 1; }
.pink { stroke: #c060a0; stroke-width: 1; }
.khaki { stroke: #a8b850; stroke-width: 1; }
.white { stroke: #b8e0b0; stroke-width: 1; }
.heavy { stroke: #f0ffe8; stroke-width: 1; }
.columns { stroke: #d8c800; stroke-width: 1; }
.contour { stroke: #a89010; stroke-width: 1; }
.canvas text { font-family: "Liberation Sans", sans-serif; text-anchor: middle; }
.level text { font-size: 10px; }
.yellow { fill: #e8f000; }
.brown { fill: #d89040; }
.white-text { fill: #f0fff0; }
.zone { fill: #e8a080; }
.zone text { font-size: 14px; }
.zone .faint { fill: #d8a060; }
.origin { fill: #f07010; font-size: 9px; }
#spots text { font-size: 5px; fill: #e4ecf4; }
.layouts { height: 11px; display: flex; align-items: center; font-size: 6px; color: #d8d8d8; background: #2d3035; }
.layouts button:not(.tab) { width: 9px; height: 9px; background: #101114; border: 1px solid #50545a; margin-right: 1px; }
.layouts svg { width: 7px; height: 7px; fill: #eee; stroke: none; }
.layouts .tab { padding: 0 2px; }
.layouts .on { color: #fff; font-weight: 700; }
.command { height: 51px; display: flex; background: #2f3237; }
.cmdgrip { width: 4px; display: flex; flex-direction: column; align-items: center; gap: 9px; font-size: 6px; }
.cmdgrip .grip { width: 1px; height: 9px; }
.cmdmain { flex: 1; display: grid; grid-template: 39px 11px / 6px 1fr 9px; margin-top: 1px; }
.cmdmain pre { grid-column: 1 / 3; background: #838383; color: #fff; font: 7px/9px "Liberation Mono", "DejaVu Sans Mono", monospace; font-family: "DejaVu Sans Mono", monospace; padding: 6px 3px; overflow: hidden; }
.thumb { background: linear-gradient(#777, #777) center 19px / 1px 10px no-repeat #f0f0f0; }
.cmdmain label { padding: 1px 2px; }
.cmdmain input { background: none; border: 0; padding: 0 0 0 2px; font: italic 7px/10px "DejaVu Sans Mono", monospace; color: #ccc; min-width: 0; }
.cmdmain input::placeholder { color: #b0b2b5; }

.tips { display: flex; flex-direction: column; background: #2d3035; color: #f0f0f0; font-family: Lato, "Open Sans", sans-serif; }
.tips-grip { height: 6px; display: flex; align-items: center; justify-content: space-between; padding: 0 1px 0 88px; font-size: 6px; }
.tips-head { height: 18px; background: #18191c; display: flex; justify-content: flex-end; align-items: center; padding-right: 6px; margin-left: 1px; }
.tips-head svg { width: 8px; height: 8px; stroke: #d8d8d8; }
.tips-body { padding: 15px 10px 0 19px; }
.tips-body h2 { font-size: 9px; line-height: 12px; font-weight: 700; white-space: nowrap; }
.tips-body p { margin-top: 5px; font-size: 7px; line-height: 10px; white-space: nowrap; }
.tips-body ul { list-style: none; margin-top: 19px; display: grid; gap: 17px; }
.tips-body li { display: flex; align-items: center; gap: 11px; padding-left: 1px; }
.tips-body li svg { width: 26px; height: 26px; background: #74adfb; stroke: #31557f; }
.tips-body li text { font: 700 6px "Open Sans", sans-serif; fill: #31557f; stroke: none; }
.tips-body h3 { line-height: 10px; font-weight: 700; }
.tips-body a { display: block; color: #2f7de8; text-decoration: none; font-weight: 700; line-height: 10px; }

.status { height: 13px; display: flex; justify-content: space-between; align-items: center; background: #18191c; color: #d4d6d8; padding-left: 1px; font-size: 6px; }
.ready { font-size: 7px; }
.cells { display: grid; grid-template-columns: 79px 30px 25px 28px 22px 21px 25px 24px 24px 29px 17px 16px 25px 20px 18px 22px 13px 16px 27px 19px 36px; }
.cells > * { border-left: 1px solid #a0a2a5; height: 9px; line-height: 8px; padding-left: 1px; text-align: left; overflow: hidden; }
.cells .coords { text-align: right; padding-right: 3px; }
.cells .off { color: #6a6d71; padding-left: 2px; }
.cells em { font-style: normal; background: #44474c; display: inline-block; padding: 0 1px; }
.end { display: flex; justify-content: space-between; align-items: center; padding-right: 2px; }
.end b { margin: 0 0 0 4px; }
.end i { width: 6px; height: 6px; background: repeating-linear-gradient(90deg, #888 0 1px, transparent 1px 2px); clip-path: polygon(100% 0, 100% 100%, 0 100%); }
```
FILE: drawing.js
```js
// Spot heights: x, y, label.
const spots = `351,149,12.00 430,157,12.00 502,160,10.00 445,190,4.8 525,186,9.6 496,204,9.7 364,214,9.6 335,231,9.8 355,256,9.8 331,283,9.6 408,215,11.4 399,256,9.8 441,247,9.8 482,273,9.0 443,281,9.6 387,294,2.4 490,240,9.6
550,145,10.00 646,142,75 737,145,20 601,189,23 563,204,9.3 655,201,28 691,162,10 751,177,25 781,195,22 741,219,10 784,228,9.00 786,257,9.3 625,239,9.7 664,240,15 717,241,20 755,258,9.6 640,264,9.8 770,293,9.6 731,283,13 618,299,9.4 674,302,9.5 585,265,9.5 584,232,9.7 695,270,9 544,242,9.0
344,316,9.7 358,353,9.0 354,383,9.1 342,417,8.9 364,431,8.1 392,374,9.0 437,352,9.8 493,342,9.4 538,337,8.9 525,370,9.0 400,400,8.5 490,403,9.15 415,429,8.7 470,429,7.8 549,429,7.9 448,382,8.6
354,447,8.2 383,447,8.2 432,446,8.2 464,446,8.7 500,446,8.7 537,446,8.2 559,445,8.2 353,456,8.9 383,454,7.2 431,454,7.2 463,454,7.2 498,454,7.7 537,454,7.95 557,453,7.6 355,465,8.5 385,465,7.8 431,464,8.5 463,465,8.0 498,465,8.6 535,465,8.5 558,463,8.5 360,472,8.6 385,474,9.1 434,479,8.9 466,479,8.9 501,481,8.9 539,480,8.6 558,471,8.9 560,478,8.9 562,485,8.3
765,324,9.4 724,317,15.4 741,336,9.1 764,346,9.4 702,347,9.3 737,365,9.4 756,377,9.5 703,383,9.5 742,392,8.9 751,413,9.8 719,433,10.0 696,446,10.1 661,449,10.1 736,444,9.0 718,449,9.3 689,457,9.3 662,457,7.8 712,459,9.3 661,464,8.5 687,465,9.0 711,468,9.5 662,472,8.0 684,475,8.6 707,478,9.8 665,481,8.5 684,486,9.2 708,489,9.2
577,443,8.2 602,444,8.2 620,445,6.2 636,445,10.0 577,450,7.8 602,454,7.3 622,453,7.0 636,454,7.1 604,465,8.9 622,460,8.0 635,461,8.9 603,472,8.9 621,468,8.9 635,468,8.3 611,479,8.9 626,477,8.9 640,477,8.1 576,461,8.8 577,468,9.3 578,475,8.9 580,482,14.9 591,337,9.0 586,371,8.9 586,408,9.5 664,413,8.3 628,428,8.7 655,337,9.0`.split(/\s+/);
const ns = 'http://www.w3.org/2000/svg';
const layer = document.getElementById('spots');
for (const s of spots) {
  const [x, y, label] = s.split(',');
  const t = document.createElementNS(ns, 'text');
  t.setAttribute('x', x);
  t.setAttribute('y', +y + 2);
  t.textContent = label;
  layer.appendChild(t);
}

// Survey ticks: x0, y0, x1, y1, count for each scatter area.
const areas = [
  [395, 182, 428, 430, 55], [432, 182, 710, 214, 50], [435, 222, 512, 238, 12], [596, 222, 690, 275, 32],
  [435, 290, 695, 306, 42], [435, 312, 652, 372, 90], [660, 300, 682, 410, 25], [435, 386, 670, 418, 50],
  [435, 423, 670, 432, 70], [350, 155, 640, 176, 22], [345, 190, 386, 435, 34], [715, 160, 770, 300, 26],
  [695, 300, 760, 432, 30], [345, 438, 420, 478, 26], [430, 438, 660, 484, 110], [662, 442, 725, 484, 26]
];
let seed = 17;
const random = () => (seed = (seed * 16807) % 2147483647) / 2147483647;
let d = '';
for (const [x0, y0, x1, y1, count] of areas) {
  for (let i = 0; i < count; i++) {
    const x = Math.round(x0 + random() * (x1 - x0));
    const y = Math.round(y0 + random() * (y1 - y0));
    d += `M${x} ${y}.5h${1 + Math.round(random() * 2)}`;
  }
}
// Dashed kerb marks; each entry is the start of one run.
for (const [x, y] of [[508, 388], [580, 395], [500, 395], [450, 407], [580, 407], [528, 415], [610, 415], [650, 414]]) {
  for (const [dx, w] of [[0, 3], [5, 2], [9, 4], [15, 3], [21, 2]]) d += `M${x + dx} ${y}.5h${w}`;
}
const ticks = document.createElementNS(ns, 'path');
ticks.setAttribute('d', d);
document.getElementById('ticks').appendChild(ticks);
```
